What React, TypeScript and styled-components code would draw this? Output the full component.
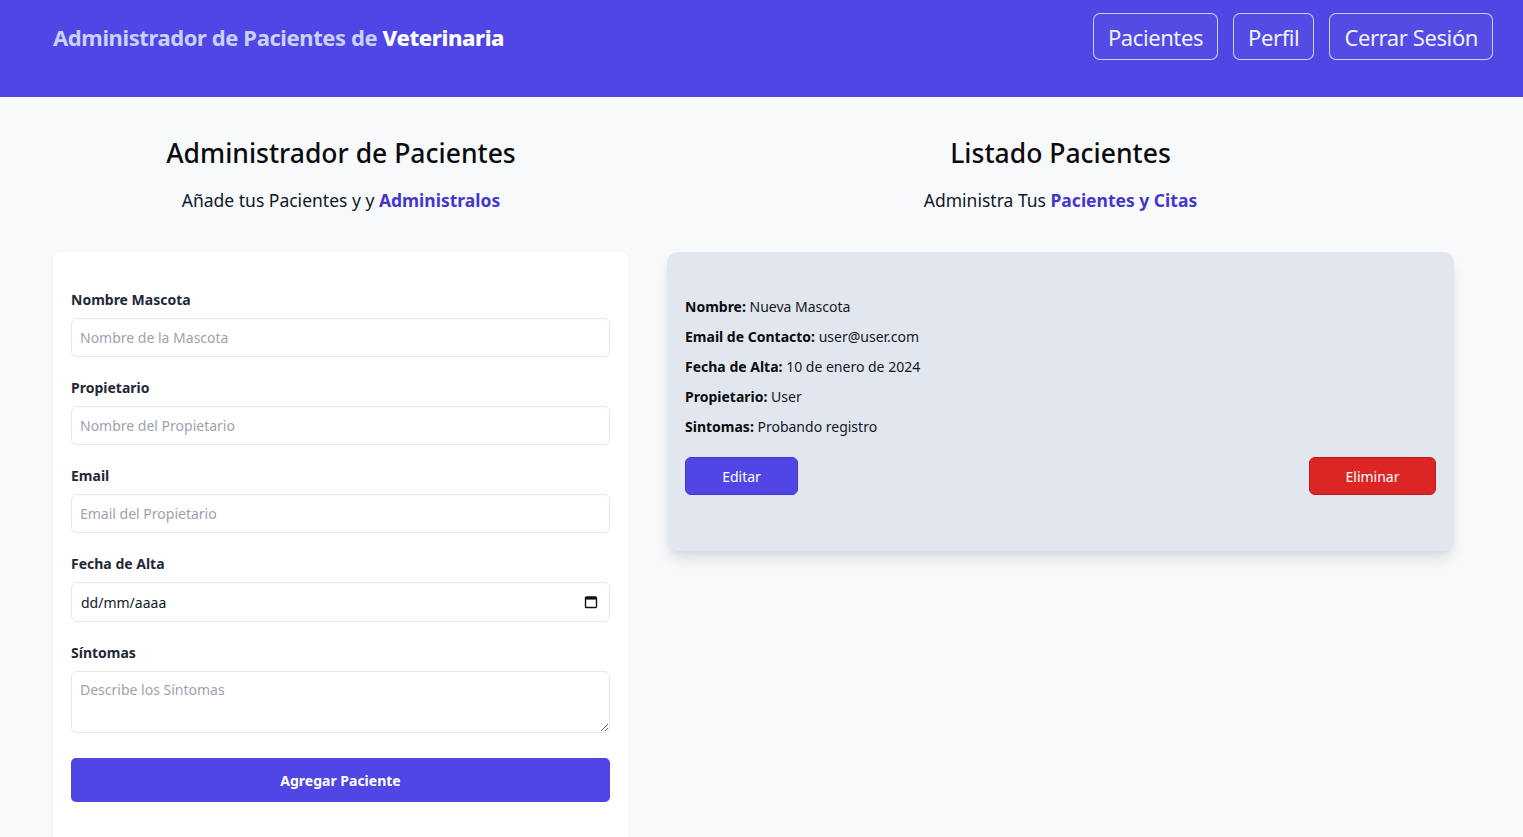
import React from "react";
import styled, { createGlobalStyle } from "styled-components";

const Global = createGlobalStyle`
  * { box-sizing: border-box; }
  body {
    margin: 0;
    background: #f8f9fb;
    font-family: "Noto Sans", "Open Sans", sans-serif;
    color: #111827;
  }
`;

const Header = styled.header`
  background: #4f46e5;
  height: 97px;
  padding: 13px 30px 0 53px;
  display: flex;
  justify-content: space-between;
  align-items: flex-start;
`;

const Brand = styled.h1`
  margin: 0;
  height: 47px;
  display: flex;
  align-items: center;
  font-size: 22px;
  font-weight: 700;
  color: #c7d2fe;
  letter-spacing: -0.4px;
  span { color: #ffffff; font-weight: 800; }
`;

const Nav = styled.nav`
  display: flex;
  gap: 15px;
`;

const NavButton = styled.button`
  height: 47px;
  padding: 0 14px;
  background: rgba(255, 255, 255, 0.03);
  border: 1px solid rgba(224, 231, 255, 0.85);
  border-radius: 7px;
  color: #eef2ff;
  font-family: inherit;
  font-size: 22px;
  font-weight: 400;
  letter-spacing: -0.4px;
`;

const Main = styled.main`
  display: grid;
  grid-template-columns: 576px 787px;
  column-gap: 38px;
  padding: 0 0 0 53px;
`;

const Column = styled.section`
  display: flex;
  flex-direction: column;
`;

const Title = styled.h2`
  margin: 38px 0 0;
  text-align: center;
  font-size: 26.5px;
  line-height: 36px;
  font-weight: 500;
  color: #0b0b0f;
`;

const Subtitle = styled.p`
  margin: 15px 0 38px;
  text-align: center;
  font-size: 17.5px;
  line-height: 28px;
  color: #111827;
  strong { color: #4338ca; font-weight: 700; }
`;

const FormCard = styled.form`
  background: #ffffff;
  border-radius: 8px 8px 0 0;
  box-shadow: 0 1px 3px rgba(15, 23, 42, 0.06);
  padding: 38px 19px 40px 18px;
  display: flex;
  flex-direction: column;
`;

const Field = styled.div`
  display: flex;
  flex-direction: column;
  gap: 8px;
  margin-bottom: 21px;
`;

const Label = styled.label`
  font-size: 14px;
  line-height: 20px;
  font-weight: 700;
  color: #1f2937;
`;

const Input = styled.input`
  height: 39px;
  width: 100%;
  border: 1px solid #e5e7eb;
  border-radius: 6px;
  padding: 0 8px;
  font-family: inherit;
  font-size: 14px;
  color: #111827;
  background: #fff;
  &::placeholder { color: #9ca3af; }
`;

const DateBox = styled.div`
  height: 40px;
  border: 1px solid #e5e7eb;
  border-radius: 6px;
  padding: 0 11px 0 9px;
  display: flex;
  align-items: center;
  justify-content: space-between;
  font-size: 14px;
  color: #111827;
  background: #fff;
`;

const TextArea = styled.textarea`
  height: 62px;
  width: 100%;
  border: 1px solid #e5e7eb;
  border-radius: 6px;
  padding: 8px 8px;
  font-family: inherit;
  font-size: 14px;
  background: #fff;
  &::placeholder { color: #9ca3af; }
`;

const Submit = styled.button`
  margin-top: 4px;
  height: 44px;
  width: 100%;
  border: none;
  border-radius: 5px;
  background: #4f46e5;
  color: #ffffff;
  font-family: inherit;
  font-size: 14px;
  font-weight: 700;
`;

const PatientCard = styled.article`
  background: #e2e6ee;
  border-radius: 10px;
  box-shadow: 0 10px 15px -3px rgba(15, 23, 42, 0.12), 0 4px 6px -4px rgba(15, 23, 42, 0.1);
  padding: 40px 18px 56px;
  display: flex;
  flex-direction: column;
`;

const Row = styled.p`
  margin: 0;
  font-size: 14px;
  line-height: 30px;
  color: #111827;
  b { font-weight: 700; color: #0b0b0f; }
`;

const Actions = styled.div`
  margin-top: 15px;
  display: flex;
  justify-content: space-between;
`;

const ActionButton = styled.button<{ $danger?: boolean; $w: number }>`
  height: 38px;
  width: ${(p) => p.$w}px;
  border-radius: 6px;
  border: 1px solid ${(p) => (p.$danger ? "#b91c1c" : "#4338ca")};
  background: ${(p) => (p.$danger ? "#dc2626" : "#4f46e5")};
  color: #fff;
  font-family: inherit;
  font-size: 14px;
`;

const CalendarIcon = () => (
  <svg width="14" height="14" viewBox="0 0 14 14" fill="none">
    <rect x="1.5" y="2" width="11" height="10.5" rx="1" stroke="#111" strokeWidth="1.4" />
    <rect x="1.5" y="2" width="11" height="2.6" fill="#111" />
  </svg>
);

export default function App() {
  return (
    <>
      <Global />
      <Header>
        <Brand>
          Administrador de Pacientes de&nbsp;<span>Veterinaria</span>
        </Brand>
        <Nav>
          <NavButton>Pacientes</NavButton>
          <NavButton>Perfil</NavButton>
          <NavButton>Cerrar Sesión</NavButton>
        </Nav>
      </Header>
      <Main>
        <Column>
          <Title>Administrador de Pacientes</Title>
          <Subtitle>
            Añade tus Pacientes y y <strong>Administralos</strong>
          </Subtitle>
          <FormCard onSubmit={(e) => e.preventDefault()}>
            <Field>
              <Label>Nombre Mascota</Label>
              <Input placeholder="Nombre de la Mascota" />
            </Field>
            <Field>
              <Label>Propietario</Label>
              <Input placeholder="Nombre del Propietario" />
            </Field>
            <Field>
              <Label>Email</Label>
              <Input placeholder="Email del Propietario" />
            </Field>
            <Field>
              <Label>Fecha de Alta</Label>
              <DateBox>
                <span>dd/mm/aaaa</span>
                <CalendarIcon />
              </DateBox>
            </Field>
            <Field>
              <Label>Síntomas</Label>
              <TextArea placeholder="Describe los Síntomas" />
            </Field>
            <Submit type="submit">Agregar Paciente</Submit>
          </FormCard>
        </Column>
        <Column>
          <Title>Listado Pacientes</Title>
          <Subtitle>
            Administra Tus <strong>Pacientes y Citas</strong>
          </Subtitle>
          <PatientCard>
            <Row><b>Nombre:</b> Nueva Mascota</Row>
            <Row><b>Email de Contacto:</b> user@user.com</Row>
            <Row><b>Fecha de Alta:</b> 10 de enero de 2024</Row>
            <Row><b>Propietario:</b> User</Row>
            <Row><b>Sintomas:</b> Probando registro</Row>
            <Actions>
              <ActionButton $w={113}>Editar</ActionButton>
              <ActionButton $w={127} $danger>Eliminar</ActionButton>
            </Actions>
          </PatientCard>
        </Column>
      </Main>
    </>
  );
}
